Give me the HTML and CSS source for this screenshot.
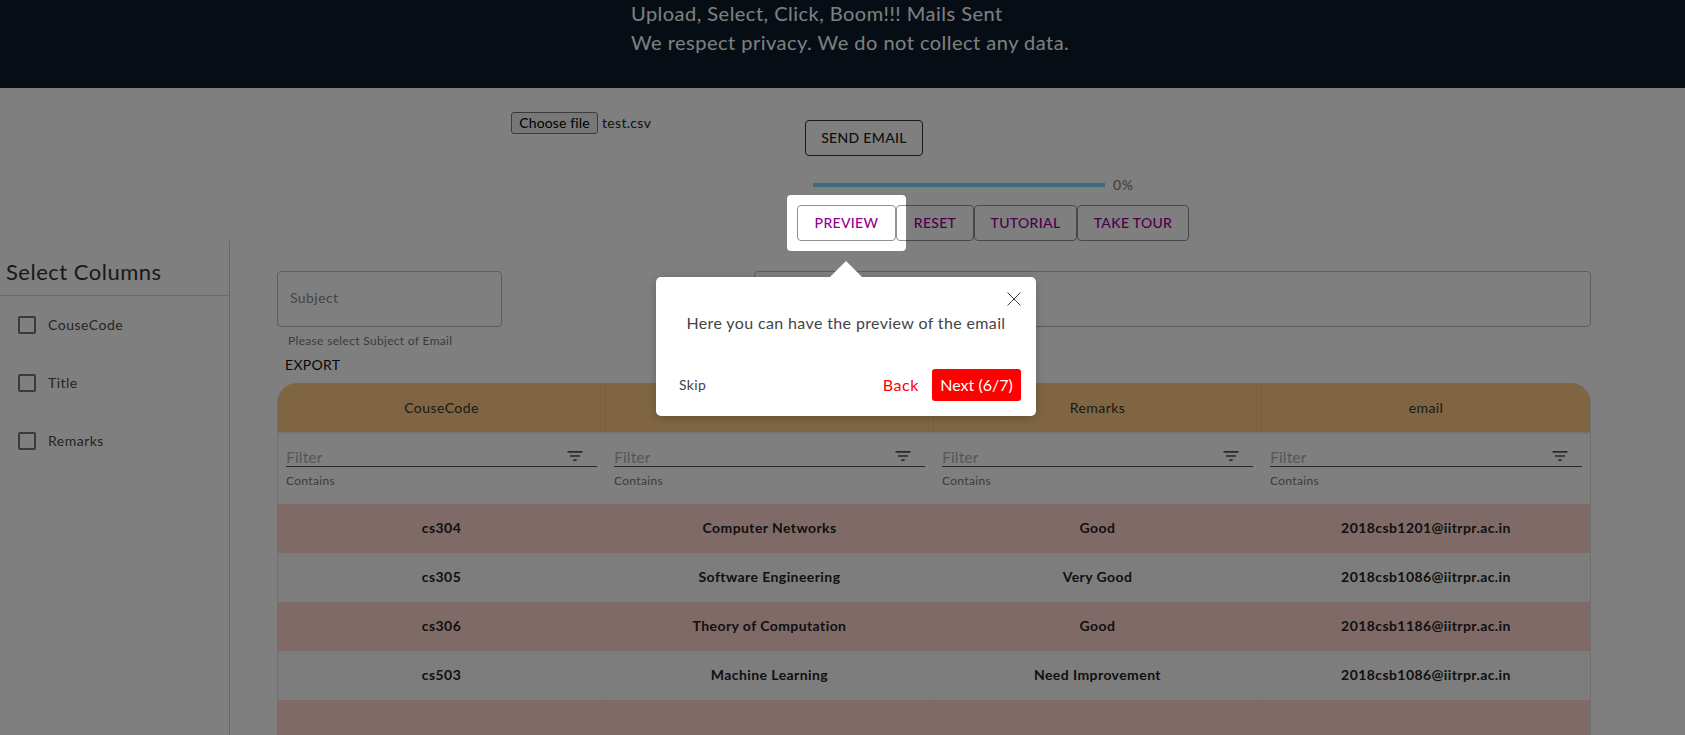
FILE: index.html
```html
<!DOCTYPE html>
<html lang="en">
<head>
<meta charset="utf-8">
<title>Mail Sender</title>
<link rel="stylesheet" href="styles.css">
</head>
<body>
<header class="hero">
  <p>Upload, Select, Click, Boom!!! Mails Sent</p>
  <p>We respect privacy. We do not collect any data.</p>
</header>
<section class="controls">
  <div class="file-pick"><button class="file-btn">Choose file</button><span class="file-name">test.csv</span></div>
  <div class="actions">
    <button class="btn send"><span class="lift">SEND EMAIL</span></button>
    <div class="progress"><div class="progress-bar"></div><span class="progress-label">0%</span></div>
    <div class="btn-row">
      <button class="btn purple w-preview"><span class="lift">PREVIEW</span></button>
      <button class="btn purple w-reset"><span class="lift">RESET</span></button>
      <button class="btn purple w-tutorial"><span class="lift">TUTORIAL</span></button>
      <button class="btn purple w-tour"><span class="lift">TAKE TOUR</span></button>
    </div>
  </div>
</section>
<div class="workspace">
  <aside class="sidebar">
    <h2 class="side-title">Select Columns</h2>
    <label class="check"><span class="box"></span><span class="lift">CouseCode</span></label>
    <label class="check"><span class="box"></span><span class="lift">Title</span></label>
    <label class="check"><span class="box"></span><span class="lift">Remarks</span></label>
  </aside>
  <main class="content">
    <div class="fields">
      <div class="field subject"><span>Subject</span></div>
      <div class="field body-field"></div>
    </div>
    <p class="helper">Please select Subject of Email</p>
    <div class="export">EXPORT</div>
    <div class="grid-table">
      <div class="row head">
        <div class="cell">CouseCode</div><div class="cell">Title</div><div class="cell">Remarks</div><div class="cell">email</div>
      </div>
      <div class="row filters">
        <div class="filter"><div class="filter-input"><span class="filter-word">Filter</span><svg viewBox="0 0 24 24" class="filter-icon"><path d="M10 18h4v-2h-4v2zM3 6v2h18V6H3zm3 7h12v-2H6v2z"/></svg></div><small>Contains</small></div>
        <div class="filter"><div class="filter-input"><span class="filter-word">Filter</span><svg viewBox="0 0 24 24" class="filter-icon"><path d="M10 18h4v-2h-4v2zM3 6v2h18V6H3zm3 7h12v-2H6v2z"/></svg></div><small>Contains</small></div>
        <div class="filter"><div class="filter-input"><span class="filter-word">Filter</span><svg viewBox="0 0 24 24" class="filter-icon"><path d="M10 18h4v-2h-4v2zM3 6v2h18V6H3zm3 7h12v-2H6v2z"/></svg></div><small>Contains</small></div>
        <div class="filter"><div class="filter-input"><span class="filter-word">Filter</span><svg viewBox="0 0 24 24" class="filter-icon"><path d="M10 18h4v-2h-4v2zM3 6v2h18V6H3zm3 7h12v-2H6v2z"/></svg></div><small>Contains</small></div>
      </div>
      <div class="row data odd"><div class="cell"><span class="lift">cs304</span></div><div class="cell"><span class="lift">Computer Networks</span></div><div class="cell"><span class="lift">Good</span></div><div class="cell"><span class="lift">2018csb1201@iitrpr.ac.in</span></div></div>
      <div class="row data"><div class="cell"><span class="lift">cs305</span></div><div class="cell"><span class="lift">Software Engineering</span></div><div class="cell"><span class="lift">Very Good</span></div><div class="cell"><span class="lift">2018csb1086@iitrpr.ac.in</span></div></div>
      <div class="row data odd"><div class="cell"><span class="lift">cs306</span></div><div class="cell"><span class="lift">Theory of Computation</span></div><div class="cell"><span class="lift">Good</span></div><div class="cell"><span class="lift">2018csb1186@iitrpr.ac.in</span></div></div>
      <div class="row data"><div class="cell"><span class="lift">cs503</span></div><div class="cell"><span class="lift">Machine Learning</span></div><div class="cell"><span class="lift">Need Improvement</span></div><div class="cell"><span class="lift">2018csb1086@iitrpr.ac.in</span></div></div>
      <div class="row data odd"><div class="cell"></div><div class="cell"></div><div class="cell"></div><div class="cell"></div></div>
    </div>
  </main>
</div>
<div class="spotlight"></div>
<div class="tip">
  <span class="tip-arrow"></span>
  <svg class="tip-close" viewBox="0 0 14 14"><path d="M0.5 0.5 13.5 13.5M13.5 0.5 0.5 13.5"/></svg>
  <p class="tip-text">Here you can have the preview of the email</p>
  <div class="tip-foot">
    <span class="tip-skip">Skip</span>
    <span class="tip-back">Back</span>
    <span class="tip-next">Next (6/7)</span>
  </div>
</div>
</body>
</html>
```
FILE: styles.css
```css
* { box-sizing: border-box; }
html, body { margin: 0; height: 735px; overflow: hidden; }
body { position: relative; background: #fff; color: #222; font-family: "Lato", "Noto Sans", sans-serif; letter-spacing: .02em; }
p, h2 { margin: 0; }
button { font-family: inherit; letter-spacing: inherit; }
.lift { display: block; margin-bottom: 2px; }

.hero { height: 88px; padding-left: 631px; background: #0c1a2a; color: #fff; font-size: 20px; line-height: 28.6px; letter-spacing: .48px; }
.hero p { position: relative; top: -1px; }

.controls { display: flex; height: 153px; padding-left: 511px; }
.file-pick { width: 286px; padding-top: 24px; display: flex; align-items: flex-start; font-size: 14px; }
.file-btn { width: 87px; height: 22px; padding: 0; font-size: 14px; line-height: 18px; letter-spacing: .01em; background: #efefef; border: 1px solid #767676; border-radius: 3px; color: #000; }
.file-name { margin-left: 4px; line-height: 22px; color: #222; }
.actions { display: flex; flex-direction: column; align-items: flex-start; }
.btn { height: 36px; padding: 0; font-size: 14px; font-weight: 500; background: transparent; border: 1px solid #8a9399; border-radius: 4px; }
.send { width: 118px; margin: 32px 0 0 8px; color: #222; border-color: #333; }
.progress { display: flex; align-items: center; height: 4px; margin: 27px 0 0 16px; }
.progress-bar { width: 292px; height: 4px; background: #72d8ff; }
.progress-label { margin: 0 0 2px 8px; font-size: 14px; color: #777; letter-spacing: .04em; }
.btn-row { display: flex; margin-top: 18px; }
.purple { color: #930093; }
.w-preview { width: 99px; }
.w-reset { width: 78px; }
.w-tutorial { width: 103px; }
.w-tour { width: 112px; }

.workspace { display: flex; height: 494px; }
.sidebar { flex: none; width: 230px; border-right: 1px solid #ccc; }
.side-title { height: 55px; padding: 17px 0 0 6px; font-size: 22px; font-weight: 400; line-height: 28px; letter-spacing: .5px; border-bottom: 1px solid #d4d4d4; color: #333; }
.check { display: flex; align-items: center; gap: 12px; height: 58px; padding-left: 18px; font-size: 14px; letter-spacing: .035em; color: #4a4a4a; }
.box { width: 18px; height: 18px; border: 2px solid #757575; border-radius: 2px; }

.content { flex: 1; min-width: 0; padding: 30px 94px 0 47px; }
.fields { display: flex; gap: 252px; }
.field { height: 56px; border: 1px solid #bbb; border-radius: 4px; display: flex; align-items: center; padding: 0 0 4px 12px; font-size: 14px; letter-spacing: .03em; color: #8a8a8a; }
.subject { width: 225px; }
.body-field { flex: 1; }
.helper { margin: 6px 0 0 11px; font-size: 12px; line-height: 16px; color: #777; }
.export { margin: 6px 0 8px 8px; font-size: 14px; line-height: 20px; color: #111; }

.grid-table { border-left: 1px solid #e0e0e0; border-right: 1px solid #e0e0e0; border-radius: 20px 20px 0 0; overflow: hidden; }
.row { display: grid; grid-template-columns: repeat(4, 1fr); }
.cell { display: flex; align-items: center; justify-content: center; border-right: 1px solid rgba(0,0,0,.025); font-size: 14px; letter-spacing: .03em; }
.cell:last-child { border-right: 0; }
.head { height: 49px; background: #ffca84; box-shadow: 0 1px 2px rgba(0,0,0,.15); position: relative; }
.head .cell { color: #333; border-right-color: rgba(0,0,0,.06); }
.filters { height: 72px; background: #fff; }
.filter { padding: 14px 8px 0; border-right: 1px solid rgba(0,0,0,.025); }
.filter:last-child { border-right: 0; }
.filter-input { display: flex; justify-content: space-between; align-items: center; height: 21px; padding-right: 12px; border-bottom: 1px solid #555; font-size: 16px; line-height: 20px; color: #b0b0b0; }
.filter-word { margin-top: 2px; letter-spacing: 0; }
.filter-icon { width: 20px; height: 20px; fill: #555; }
.filter small { display: block; margin-top: 6px; font-size: 12px; line-height: 16px; color: #777; }
.data { height: 49px; background: #fbfbfb; }
.odd { background: #ffd5d1; }
.data .cell { font-weight: 700; color: #222; }

.spotlight { position: absolute; left: 787px; top: 195px; width: 119px; height: 56px; border-radius: 4px; box-shadow: 0 0 0 2000px rgba(0,0,0,.5); }
.tip { position: absolute; left: 656px; top: 277px; width: 380px; height: 139px; padding: 0 15px 0 23px; background: #fff; border-radius: 5px; box-shadow: 0 2px 10px rgba(0,0,0,.2); color: #444; }
.tip-arrow { position: absolute; left: 174px; top: -16px; width: 0; height: 0; border-left: 16px solid transparent; border-right: 16px solid transparent; border-bottom: 16px solid #fff; }
.tip-close { position: absolute; right: 15px; top: 15px; width: 14px; height: 14px; fill: none; stroke: #444; stroke-width: 1; }
.tip-text { padding-top: 36px; margin-left: -23px; margin-right: -15px; text-align: center; font-size: 16px; line-height: 20px; letter-spacing: .37px; }
.tip-foot { display: flex; align-items: center; margin-top: 36px; }
.tip-skip { margin: 0 auto 2px 0; font-size: 14px; }
.tip-back { margin: 0 13px 2px 0; font-size: 16px; letter-spacing: .6px; color: #f00; }
.tip-next { display: flex; align-items: center; justify-content: center; width: 89px; height: 32px; padding-bottom: 2px; font-size: 16px; letter-spacing: 0; color: #fff; background: #f00; border-radius: 3px; }
```
